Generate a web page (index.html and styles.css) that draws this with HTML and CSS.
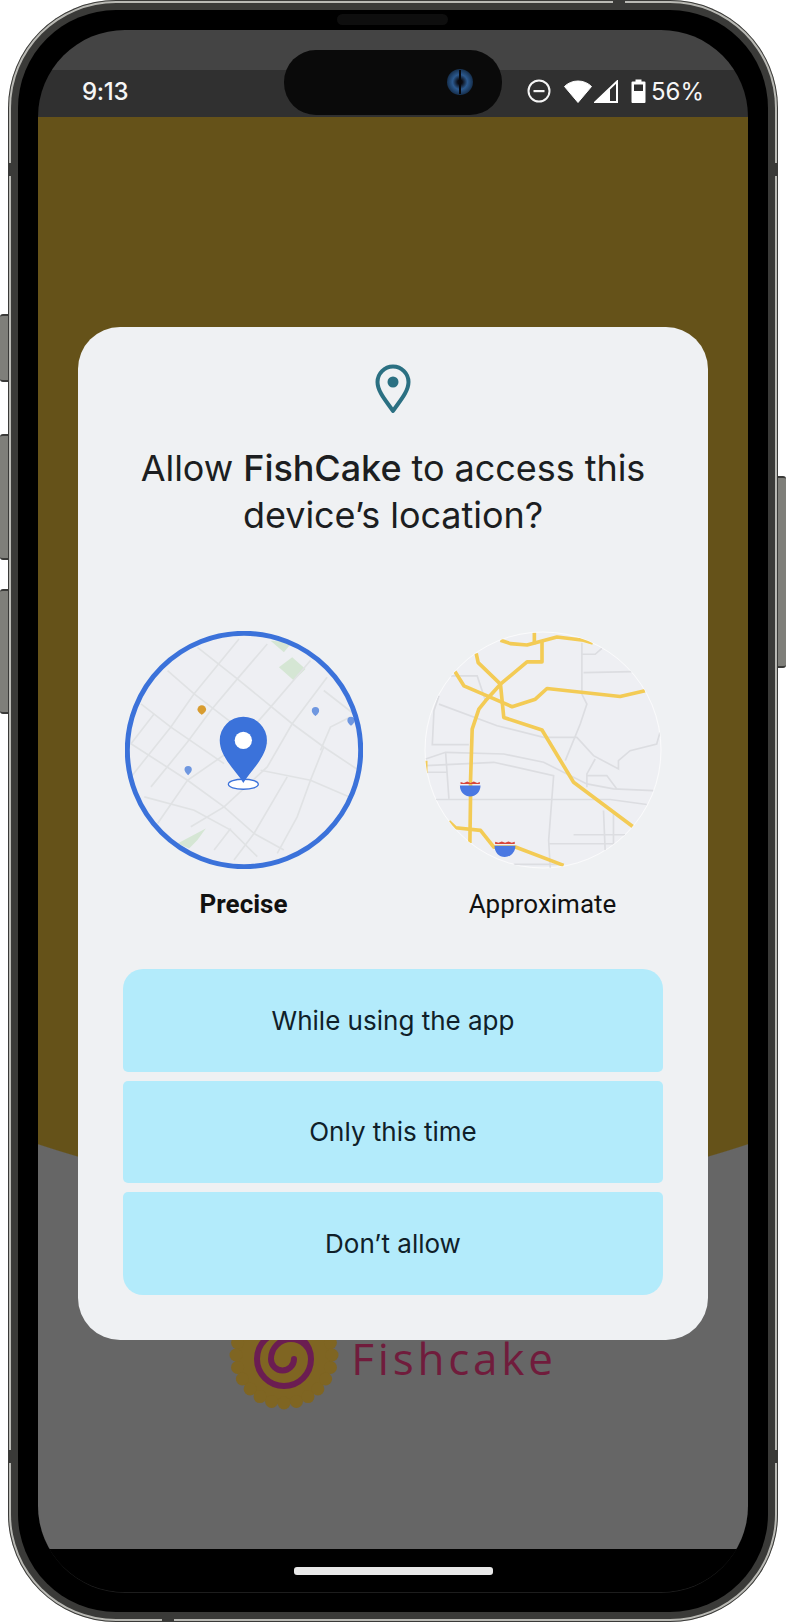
FILE: index.html
```html
<!DOCTYPE html>
<html lang="en">
<head>
<meta charset="utf-8">
<title>FishCake location permission</title>
<link rel="stylesheet" href="styles.css">
</head>
<body>
<div class="device">
  <span class="key key-1"></span><span class="key key-2"></span><span class="key key-3"></span><span class="key key-4"></span>
  <div class="rim">
    <span class="notch notch-lt"></span><span class="notch notch-rt"></span><span class="notch notch-lb"></span><span class="notch notch-rb"></span><span class="notch notch-top"></span><span class="notch notch-bottom"></span>
    <div class="band">
      <div class="bezel">
        <span class="speaker"></span>
        <div class="island"><span class="camera"><span class="camera-slit"></span></span></div>
        <div class="screen">
          <div class="top-strip"></div>
          <div class="status">
            <span class="clock">9:13</span>
            <div class="status-right">
              <svg class="ic-dnd" width="24" height="24" viewBox="0 0 24 24"><circle cx="12" cy="12" r="10.5" fill="none" stroke="#f4f4f4" stroke-width="2"/><rect x="6.5" y="11" width="11" height="2.2" fill="#f4f4f4"/></svg>
              <svg class="ic-wifi" width="28" height="23" viewBox="0 0 28 23"><path d="M0.5 6.5C4 3 9 1 14 1s10 2 13.500 5.500L14 22.500z" fill="#fff" stroke="#fff" stroke-linejoin="round"/></svg>
              <svg class="ic-signal" width="24" height="23" viewBox="0 0 24 23"><path d="M23 1.500V22H1.500z" fill="none" stroke="#fff" stroke-width="2"/><path d="M16 9V22H1.500z" fill="#fff"/></svg>
              <svg class="ic-batt" width="15" height="24" viewBox="0 0 15 24"><path d="M4.500 0.500h6v2h3a1 1 0 0 1 1 1V23a1 1 0 0 1-1 1H1.500a1 1 0 0 1-1-1V3.500a1 1 0 0 1 1-1h3z" fill="#fff"/><rect x="3" y="5.500" width="9" height="6.500" fill="#303030"/></svg>
              <span class="percent">56%</span>
            </div>
          </div>
          <div class="content">
            <div class="dialog">
              <svg class="dialog-icon" width="36" height="50" viewBox="0 0 36 50"><path d="M18 47C12 38 2.500 28 2.500 18a15.500 15.500 0 0 1 31 0C33.500 28 24 38 18 47z" fill="none" stroke="#2b7082" stroke-width="4" stroke-linejoin="round"/><circle cx="18" cy="18" r="5.500" fill="#2b7082"/></svg>
              <h1 class="title">Allow <b>FishCake</b> to access this device’s location?</h1>
              <div class="choices">
                <div class="choice">
                  <svg class="map" viewBox="42 30 716 716" width="238" height="238">
                    <defs><clipPath id="clip-a"><circle cx="400" cy="419" r="352"/></clipPath></defs>
                    <circle cx="400" cy="388" r="352" fill="#eeeff3"/>
                    <g clip-path="url(#clip-a)" transform="translate(0 -31)">
                      <path d="M505 170L545 140L585 175L550 210zM480 90L545 95L520 125zM200 700L285 655L260 690L235 715z" fill="#d5e6d4"/>
                      <g fill="none" stroke="#e0e2e4" stroke-width="5">
                        <path d="M385 85L250 250L180 350L100 450L60 500"/>
                        <path d="M470 100L380 205L300 300L230 395L120 530"/>
                        <path d="M600 150L480 290L375 410L230 510L140 640"/>
                        <path d="M650 200L545 340L470 470L340 590L240 650"/>
                        <path d="M640 410L600 510L560 620L500 730"/>
                        <path d="M530 500L430 670L370 750"/>
                        <path d="M720 320L660 350L630 420"/>
                        <path d="M260 110L380 205L545 340L640 410L745 480"/>
                        <path d="M170 180L250 250L380 350L470 400"/>
                        <path d="M90 280L180 350L340 460"/>
                        <path d="M60 400L230 510L340 590L430 670L520 720"/>
                        <path d="M100 560L250 600L360 660L440 740"/>
                        <path d="M450 480L600 510L740 570"/>
                        <path d="M640 240L730 310M130 310L60 400M360 655L310 720"/>
                      </g>
                      <path d="M273 284a13 13 0 0 1 13 13c0 8-13 16-13 16s-13-8-13-16a13 13 0 0 1 13-13z" fill="#d89c30"/>
                      <path d="M615 290a11 11 0 0 1 11 11c0 8-11 16-11 16s-11-8-11-16a11 11 0 0 1 11-11zM722 319a11 11 0 0 1 11 11c0 8-11 16-11 16s-11-8-11-16a11 11 0 0 1 11-11zM232 467a11 11 0 0 1 11 11c0 8-11 17-11 17s-11-9-11-17a11 11 0 0 1 11-11z" fill="#6f97e0"/>
                      <ellipse cx="398" cy="522" rx="45" ry="15" fill="#fff" stroke="#3b72da" stroke-width="4"/>
                      <path d="M398 518C375 480 327 440 327 390a71 71 0 0 1 142 0C469 440 421 480 398 518z" fill="#3b72da"/>
                      <circle cx="398" cy="390" r="26" fill="#fff"/>
                    </g>
                    <circle cx="400" cy="388" r="351" fill="none" stroke="#3b72da" stroke-width="15"/>
                  </svg>
                  <span class="choice-label choice-on">Precise</span>
                </div>
                <div class="choice">
                  <svg class="map" viewBox="40 30 716 716" width="238" height="238">
                    <defs><clipPath id="clip-b"><circle cx="398" cy="388" r="355"/></clipPath></defs>
                    <circle cx="398" cy="388" r="355" fill="#eeeff3" stroke="#fbfbfc" stroke-width="3"/>
                    <g clip-path="url(#clip-b)" fill="none">
                      <g stroke="#dcdde1" stroke-width="5">
                        <path d="M515 65V220L530 250L510 310L465 420"/>
                        <path d="M520 155L665 152M515 100H555L575 82"/>
                        <path d="M85 225L70 270L65 372H175"/>
                        <path d="M85 250L260 315L400 350H500L550 405L625 445V420L660 390L740 370L750 335"/>
                        <path d="M45 415L105 395L280 400L400 425L530 490L610 505L730 510"/>
                        <path d="M45 435L250 425L430 465L415 660L420 745"/>
                        <path d="M50 455H110M105 395L115 535"/>
                        <path d="M75 537H600L710 552"/>
                        <path d="M555 415L530 460V500M530 465H590L620 505"/>
                        <path d="M580 570L585 690M610 580V670M490 643H645M415 670H610"/>
                        <path d="M120 165H200L225 240M310 732H460"/>
                      </g>
                      <g stroke="#f3cb55" stroke-width="11" stroke-linejoin="round">
                        <path d="M270 58L300 68L350 72L395 60L440 48L520 58L548 66"/>
                        <path d="M372 35V70"/>
                        <path d="M395 60V123H350L270 190L225 240L205 265L185 325L180 480V530L178 668"/>
                        <path d="M197 97L203 125L270 190L280 290L395 328L490 485L668 618"/>
                        <path d="M133 152L160 195L230 225L305 258L375 235L410 203L630 227L705 210"/>
                        <path d="M115 603L135 622L210 630L250 680H315L460 735"/>
                        <path d="M45 420V458"/>
                      </g>
                      <path d="M148 495H210C210 515 195 528 179 528S148 515 148 495zM252 676H315C315 696 300 710 283 710S252 696 252 676z" fill="#4a78e2"/>
                      <path d="M150 484L160 487L170 483L180 487L190 483L200 487L208 484V490H150zM254 664L264 667L274 663L284 667L294 663L304 667L313 664V671H254z" fill="#d8463a"/>
                    </g>
                  </svg>
                  <span class="choice-label">Approximate</span>
                </div>
              </div>
              <div class="actions">
                <div class="action action-first">While using the app</div>
                <div class="action">Only this time</div>
                <div class="action action-last">Don’t allow</div>
              </div>
            </div>
            <div class="brand">
              <svg class="brand-mark" width="110" height="110" viewBox="-55 -55 110 110">
                <g fill="#7f6522">
                  <circle r="49"/>
                  <circle cx="0" cy="48" r="6.500"/><circle cx="12.400" cy="46.400" r="6.500"/><circle cx="24" cy="41.600" r="6.500"/><circle cx="33.900" cy="33.900" r="6.500"/><circle cx="41.600" cy="24" r="6.500"/><circle cx="46.400" cy="12.400" r="6.500"/><circle cx="48" cy="0" r="6.500"/><circle cx="46.400" cy="-12.400" r="6.500"/><circle cx="41.600" cy="-24" r="6.500"/><circle cx="33.900" cy="-33.900" r="6.500"/><circle cx="24" cy="-41.600" r="6.500"/><circle cx="12.400" cy="-46.400" r="6.500"/><circle cx="0" cy="-48" r="6.500"/><circle cx="-12.400" cy="-46.400" r="6.500"/><circle cx="-24" cy="-41.600" r="6.500"/><circle cx="-33.900" cy="-33.900" r="6.500"/><circle cx="-41.600" cy="-24" r="6.500"/><circle cx="-46.400" cy="-12.400" r="6.500"/><circle cx="-48" cy="0" r="6.500"/><circle cx="-46.400" cy="12.400" r="6.500"/><circle cx="-41.600" cy="24" r="6.500"/><circle cx="-33.900" cy="33.900" r="6.500"/><circle cx="-24" cy="41.600" r="6.500"/><circle cx="-12.400" cy="46.400" r="6.500"/>
                </g>
                <path d="M10 4A11.500 11.500 0 0 1-13 4A20 20 0 0 1 27 4A27 27 0 0 1-27 4A27 27 0 0 1 27 4" fill="none" stroke="#6b1d52" stroke-width="6" stroke-linecap="round"/>
              </svg>
              <span class="brand-name">Fishcake</span>
            </div>
          </div>
          <div class="navbar"><span class="home"></span></div>
        </div>
      </div>
    </div>
  </div>
</div>
</body>
</html>
```

FILE: styles.css
```css
* { box-sizing: border-box; }
html, body { margin: 0; padding: 0; background: #fff; }
body { width: 786px; height: 1623px; overflow: hidden; font-family: Inter, "Noto Sans", sans-serif; }

.device { position: relative; width: 770px; height: 1622px; margin-left: 8px; }

.key { position: absolute; width: 8px; background: #7f7f7a; border-top: 2px solid #3a3a38; border-bottom: 2px solid #3a3a38; }
.key-1, .key-2, .key-3 { left: -8px; border-radius: 3px 0 0 3px; }
.key-1 { top: 314px; height: 68px; }
.key-2 { top: 434px; height: 126px; }
.key-3 { top: 589px; height: 125px; }
.key-4 { right: -8px; top: 476px; height: 192px; border-radius: 0 3px 3px 0; }

.rim { position: relative; height: 100%; padding: 3px; border-radius: 108px; background: #b9b9b4; box-shadow: inset 0 0 0 1px #3a3a38; }
.notch { position: absolute; background: #3a3a38; }
.notch-lt, .notch-rt, .notch-lb, .notch-rb { width: 5px; height: 13px; }
.notch-lt { left: 0; top: 163px; }
.notch-rt { right: 0; top: 163px; }
.notch-lb { left: 0; top: 1450px; }
.notch-rb { right: 0; top: 1450px; }
.notch-top, .notch-bottom { width: 12px; height: 5px; }
.notch-top { left: 605px; top: 0; }
.notch-bottom { left: 154px; bottom: 0; }

.band { position: relative; height: 100%; padding: 7px; border-radius: 105px; background: #3a3a38; }
.bezel { position: relative; height: 100%; padding: 20px 20px 19px 20px; border-radius: 98px; background: #000; }

.speaker { position: absolute; left: 319px; top: 4px; width: 111px; height: 11px; border-radius: 6px; background: #0e0e0e; }
.island { position: absolute; z-index: 3; left: 266px; top: 40px; width: 218px; height: 65px; border-radius: 32px; background: #0a0a0a; }
.camera { position: absolute; left: 163px; top: 19px; width: 26px; height: 26px; border-radius: 50%; background: radial-gradient(circle, #0a0a10 12%, #2c5a90 40%, #16304f 70%, #0a0a0a 100%); }
.camera-slit { position: absolute; left: 12px; top: 1px; width: 2px; height: 24px; background: #08080c; }

.screen { display: flex; flex-direction: column; height: 100%; overflow: hidden; border-radius: 87px; border-bottom: 1px solid #1d1d1d; background: #000; }
.top-strip { flex: 0 0 40px; background: #444; }
.status { flex: 0 0 47px; display: flex; align-items: center; justify-content: space-between; padding: 0 44px 5px 44px; background: #303030; color: #f6f6f6; }
.clock { font-size: 24px; font-weight: 500; letter-spacing: -0.3px; }
.status-right { display: flex; align-items: center; }
.ic-dnd { margin-right: 13px; }
.ic-wifi { margin-right: 2px; }
.ic-signal { margin-right: 13px; }
.ic-batt { margin-right: 5px; }
.percent { font-size: 24px; font-weight: 400; }

.content { flex: 1; display: flex; flex-direction: column; align-items: center; background: radial-gradient(circle 1130px at 50% -45px, #655219 99.9%, #666 100%); }

.dialog { position: relative; z-index: 1; display: flex; flex-direction: column; align-items: center; width: 630px; height: 1013px; margin-top: 210px; padding-top: 37px; border-radius: 42px; background: #eff1f3; }
.title { width: 570px; margin: 31px 0 0; font-size: 36px; line-height: 47px; font-weight: 400; text-align: center; color: #1c1e21; letter-spacing: -0.05px; }
.title b { font-weight: 500; }

.choices { display: grid; grid-template-columns: 238px 238px; column-gap: 61px; margin-top: 92px; }
.choice { display: flex; flex-direction: column; align-items: center; }
.map { display: block; }
.choice-label { margin-top: 20px; font-family: Roboto, sans-serif; font-size: 26px; line-height: 30px; color: #111; }
.choice-on { font-weight: 700; }

.actions { display: flex; flex-direction: column; gap: 9px; width: 540px; margin-top: 50px; }
.action { display: flex; align-items: center; justify-content: center; height: 102.67px; border-radius: 5px; background: #b3ebfb; font-size: 26px; color: #0f2029; }
.action-first { border-radius: 20px 20px 5px 5px; }
.action-last { border-radius: 5px 5px 20px 20px; }

.brand { display: flex; align-items: flex-start; gap: 12px; margin-top: -40px; }
.brand-mark { display: block; }
.brand-name { margin-top: 28px; font-family: "Open Sans", sans-serif; font-size: 44px; line-height: 60px; font-weight: 400; letter-spacing: 3.800px; color: #701c3c; }

.navbar { flex: 0 0 43px; display: flex; justify-content: center; padding-top: 18px; background: #000; }
.home { width: 199px; height: 8px; border-radius: 3px; background: #e8e8e8; }
```
